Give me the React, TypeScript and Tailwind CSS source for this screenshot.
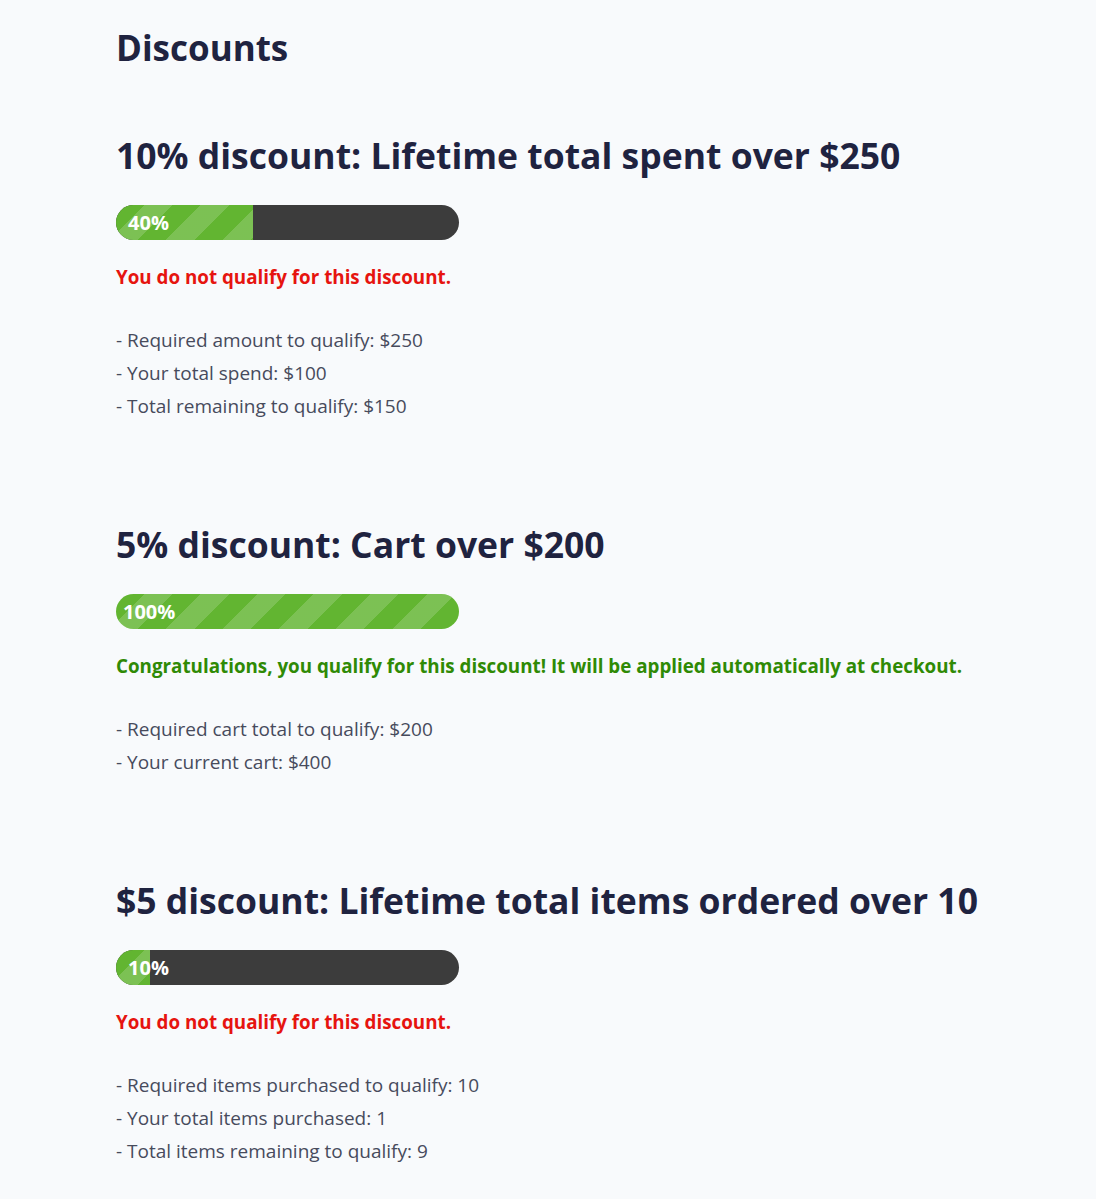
import React from "react";

type Discount = {
  title: string;
  pct: number;
  labelPad: string;
  qualifies: boolean;
  lines: string[];
};

const discounts: Discount[] = [
  {
    title: "10% discount: Lifetime total spent over $250",
    pct: 40,
    labelPad: "pl-3",
    qualifies: false,
    lines: [
      "- Required amount to qualify: $250",
      "- Your total spend: $100",
      "- Total remaining to qualify: $150",
    ],
  },
  {
    title: "5% discount: Cart over $200",
    pct: 100,
    labelPad: "pl-[7px]",
    qualifies: true,
    lines: ["- Required cart total to qualify: $200", "- Your current cart: $400"],
  },
  {
    title: "$5 discount: Lifetime total items ordered over 10",
    pct: 10,
    labelPad: "pl-3",
    qualifies: false,
    lines: [
      "- Required items purchased to qualify: 10",
      "- Your total items purchased: 1",
      "- Total items remaining to qualify: 9",
    ],
  },
];

function Bar({ pct, labelPad }: { pct: number; labelPad: string }) {
  return (
    <div className="relative h-[35px] w-[343px] overflow-hidden rounded-full bg-[#3c3c3c]">
      <div
        className="h-full bg-[#62b531] bg-[repeating-linear-gradient(135deg,transparent_0px,transparent_20px,rgba(255,255,255,0.17)_20px,rgba(255,255,255,0.17)_40px)]"
        style={{ width: `${pct}%` }}
      />
      <div
        className={`absolute inset-y-0 left-0 flex items-center ${labelPad} text-[20px] font-bold text-white`}
      >
        {pct}%
      </div>
    </div>
  );
}

export default function App() {
  return (
    <div className="min-h-[1199px] bg-[#f8fafc] font-['Open_Sans',sans-serif]">
      <div className="pb-10 pl-[116px] pr-5 pt-[22px]">
        <h1 className="text-[35px] font-bold leading-[52px] text-[#1f2340]">Discounts</h1>
        <div className="flex flex-col">
          {discounts.map((d, i) => (
            <section key={i} className={i === 0 ? "mt-[55px]" : "mt-[95px]"}>
              <h2 className="whitespace-nowrap text-[35.5px] font-bold leading-[52px] text-[#1f2340]">
                {d.title}
              </h2>
              <div className="mt-6">
                <Bar pct={d.pct} labelPad={d.labelPad} />
              </div>
              <p
                className={`mt-[22px] whitespace-nowrap text-[18.8px] font-bold leading-[30px] ${
                  d.qualifies ? "text-[#2f8a05]" : "text-[#e6140f]"
                }`}
              >
                {d.qualifies
                  ? "Congratulations, you qualify for this discount! It will be applied automatically at checkout."
                  : "You do not qualify for this discount."}
              </p>
              <div className="mt-[32px] flex flex-col">
                {d.lines.map((l, j) => (
                  <p key={j} className="text-[19px] leading-[33px] text-[#474b5c]">
                    {l}
                  </p>
                ))}
              </div>
            </section>
          ))}
        </div>
      </div>
    </div>
  );
}
